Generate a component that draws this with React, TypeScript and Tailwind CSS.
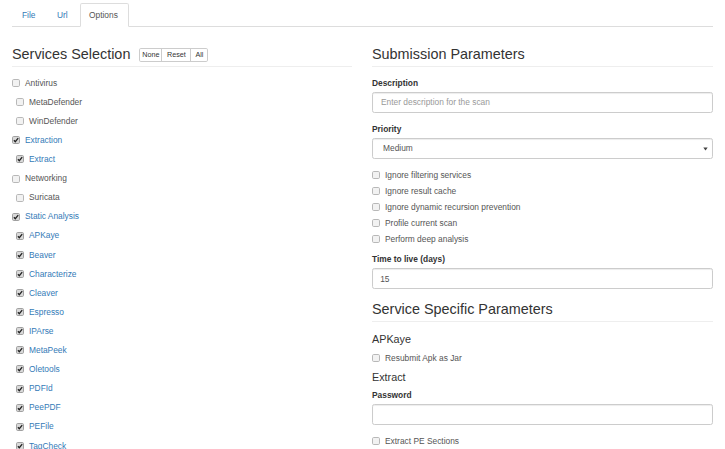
import React from "react";

const services = [
  { name: "Antivirus", checked: false, sub: false },
  { name: "MetaDefender", checked: false, sub: true },
  { name: "WinDefender", checked: false, sub: true },
  { name: "Extraction", checked: true, sub: false },
  { name: "Extract", checked: true, sub: true },
  { name: "Networking", checked: false, sub: false },
  { name: "Suricata", checked: false, sub: true },
  { name: "Static Analysis", checked: true, sub: false },
  { name: "APKaye", checked: true, sub: true },
  { name: "Beaver", checked: true, sub: true },
  { name: "Characterize", checked: true, sub: true },
  { name: "Cleaver", checked: true, sub: true },
  { name: "Espresso", checked: true, sub: true },
  { name: "IPArse", checked: true, sub: true },
  { name: "MetaPeek", checked: true, sub: true },
  { name: "Oletools", checked: true, sub: true },
  { name: "PDFId", checked: true, sub: true },
  { name: "PeePDF", checked: true, sub: true },
  { name: "PEFile", checked: true, sub: true },
  { name: "TagCheck", checked: true, sub: true },
];

const options = [
  "Ignore filtering services",
  "Ignore result cache",
  "Ignore dynamic recursion prevention",
  "Profile current scan",
  "Perform deep analysis",
];

function Box({ checked }: { checked: boolean }) {
  return (
    <svg width="8" height="8" viewBox="0 0 8 8" className="shrink-0">
      <rect
        x="0.5"
        y="0.5"
        width="7"
        height="7"
        rx="1.2"
        fill={checked ? "#d9d9d9" : "#f2f2f2"}
        stroke={checked ? "#a0a0a0" : "#b8b8b8"}
      />
      {checked && (
        <path d="M1.9 4.2 L3.3 5.7 L6.2 2.1" fill="none" stroke="#222" strokeWidth="1.3" />
      )}
    </svg>
  );
}

function Check({ label, checked = false }: { label: string; checked?: boolean }) {
  return (
    <div className="flex h-[16px] items-center gap-[5px]">
      <Box checked={checked} />
      <span className={checked ? "text-[#337ab7]" : "text-[#555]"}>{label}</span>
    </div>
  );
}

function Header({ title, children }: { title: string; children?: React.ReactNode }) {
  return (
    <div className="flex items-end border-b border-[#eee] pb-[4px]">
      <h3 className="h-[16px] text-[14.4px] leading-[16px] text-[#333]">{title}</h3>
      {children}
    </div>
  );
}

function Label({ text }: { text: string }) {
  return <div className="mb-[3px] h-[12px] font-bold leading-[12px] text-[#333]">{text}</div>;
}

export default function App() {
  return (
    <div className="h-[449px] w-[725px] overflow-hidden bg-white font-['Liberation_Sans',Arial,sans-serif] text-[8.4px] text-[#333]">
      <div className="px-[12px]">
        <div className="flex h-[27px] border-b border-[#ddd] pt-[3px]">
          <div className="h-[24px] w-[35px] pl-[10px] leading-[24px] text-[#337ab7]">File</div>
          <div className="h-[24px] w-[33px] pl-[10px] leading-[24px] text-[#337ab7]">Url</div>
          <div className="-mb-px h-[24px] w-[49px] rounded-t-[2.4px] border border-b-transparent border-[#ddd] bg-white pl-[8px] leading-[22px] text-[#555]">
            Options
          </div>
        </div>
      </div>

      <div className="flex gap-[20px] px-[12px]">
        <div className="w-[340px]">
          <div className="mt-[19px]">
            <Header title="Services Selection">
              <div className="ml-[9px] flex h-[14px] text-[7.2px] text-[#333]">
                <div className="flex w-[23px] items-center justify-center rounded-l-[1.8px] border border-[#ccc]">None</div>
                <div className="-ml-px flex w-[30px] items-center justify-center border border-[#ccc]">Reset</div>
                <div className="-ml-px flex w-[18px] items-center justify-center rounded-r-[1.8px] border border-[#ccc]">All</div>
              </div>
            </Header>
          </div>
          <div className="mt-[6.5px]">
            {services.map((s) => (
              <div key={s.name} className={`flex h-[19.1px] items-center gap-[5px] ${s.sub ? "pl-[4px]" : ""}`}>
                <Box checked={s.checked} />
                <span className={s.checked ? "text-[#337ab7]" : "text-[#555]"}>{s.name}</span>
              </div>
            ))}
          </div>
        </div>

        <div className="w-[341px]">
          <div className="mt-[19px]">
            <Header title="Submission Parameters" />
          </div>
          <div className="mt-[10px]">
            <Label text="Description" />
            <div className="flex h-[21px] items-center rounded-[2.4px] border border-[#ccc] px-[8px] text-[#999] shadow-[inset_0_1px_1px_rgba(0,0,0,0.075)]">
              Enter description for the scan
            </div>
          </div>
          <div className="mt-[10px]">
            <Label text="Priority" />
            <div className="flex h-[21px] items-center justify-between rounded-[2.4px] border border-[#ccc] pl-[10px] pr-[4px] text-[#555] shadow-[inset_0_1px_1px_rgba(0,0,0,0.075)]">
              <span>Medium</span>
              <svg width="5" height="4" viewBox="0 0 5 4">
                <path d="M0.3 0.5 L4.7 0.5 L2.5 3.5 Z" fill="#444" />
              </svg>
            </div>
          </div>
          <div className="mt-[8.4px]">
            {options.map((o) => (
              <Check key={o} label={o} />
            ))}
          </div>
          <div className="mt-[6px]">
            <Label text="Time to live (days)" />
            <div className="flex h-[21px] items-center rounded-[2.4px] border border-[#ccc] px-[7.2px] text-[#555] shadow-[inset_0_1px_1px_rgba(0,0,0,0.075)]">
              15
            </div>
          </div>
          <div className="mt-[12px]">
            <Header title="Service Specific Parameters" />
          </div>
          <h4 className="mt-[11px] h-[12px] text-[10.8px] leading-[12px] text-[#333]">APKaye</h4>
          <div className="mt-[5px]">
            <Check label="Resubmit Apk as Jar" />
          </div>
          <h4 className="mt-[5px] h-[12px] text-[10.8px] leading-[12px] text-[#333]">Extract</h4>
          <div className="mt-[6px]">
            <Label text="Password" />
            <div className="h-[21px] rounded-[2.4px] border border-[#ccc] shadow-[inset_0_1px_1px_rgba(0,0,0,0.075)]" />
          </div>
          <div className="mt-[8px]">
            <Check label="Extract PE Sections" />
          </div>
        </div>
      </div>
    </div>
  );
}
